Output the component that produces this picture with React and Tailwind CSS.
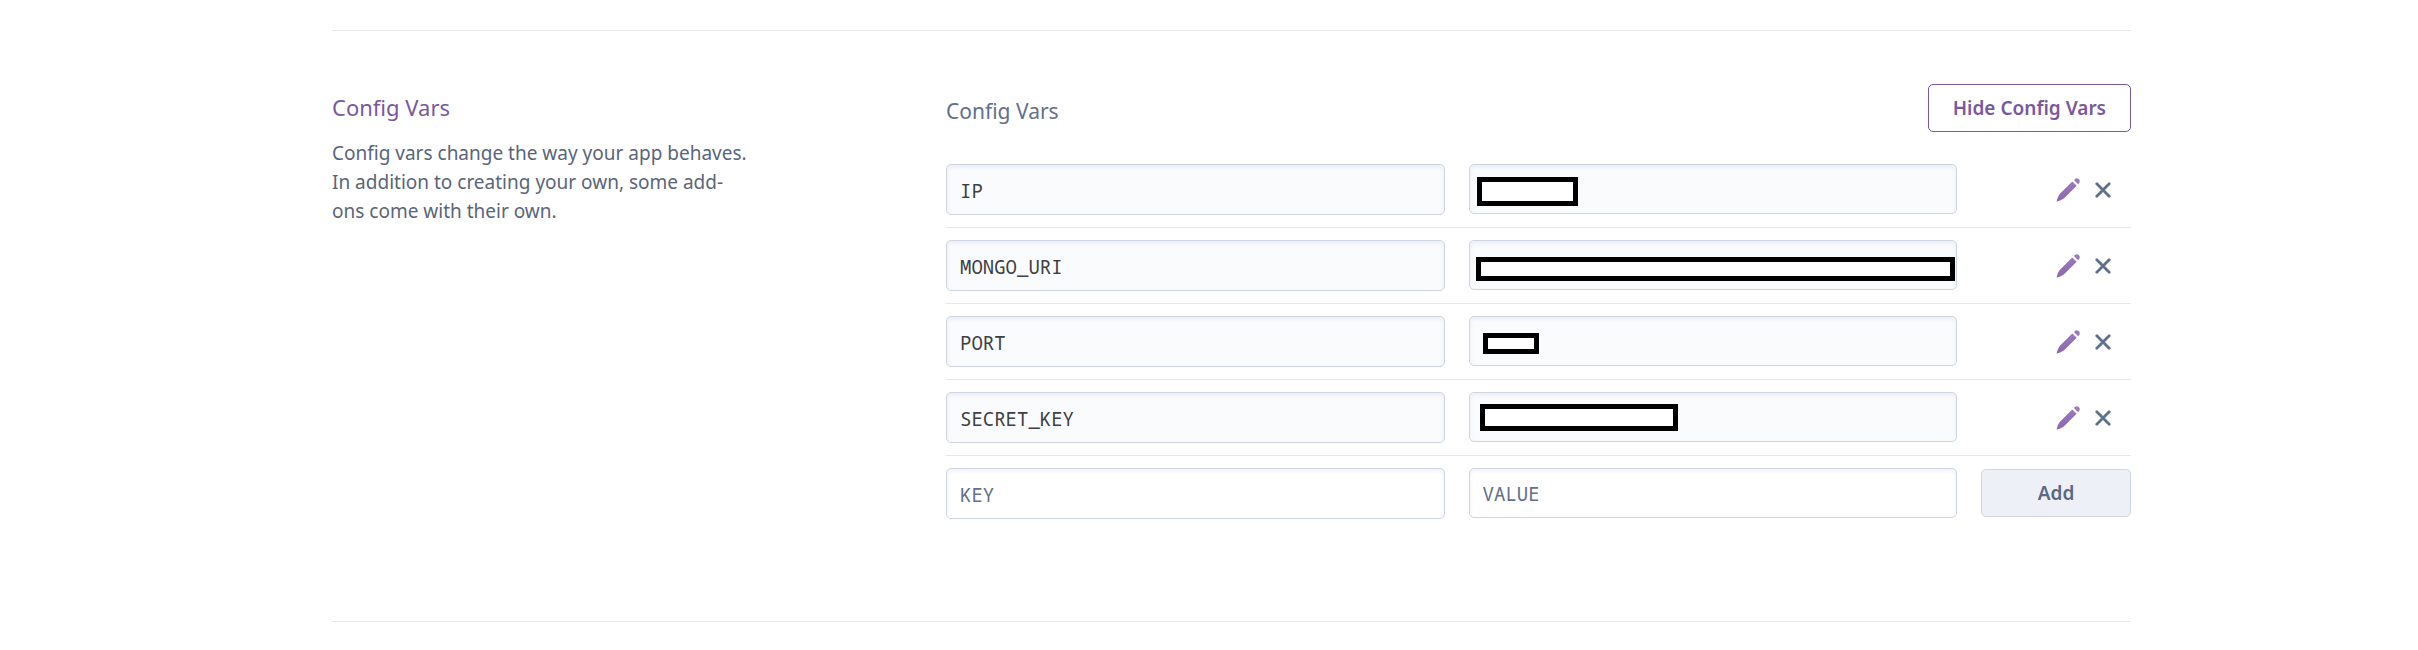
const VARS = [
  { key: "IP", mask: "left-[8px] top-[13px] w-[101px] h-[29px]" },
  { key: "MONGO_URI", mask: "left-[7px] right-[2px] top-[17px] h-[24px]" },
  { key: "PORT", mask: "left-[14px] top-[17px] w-[56px] h-[21px]" },
  { key: "SECRET_KEY", mask: "left-[11px] top-[12px] w-[198px] h-[27px]" },
];

const FIELD =
  "block w-full rounded-[5px] border border-[#cfd5e2] px-[13px] pt-[2px] font-['Noto_Sans_Mono','DejaVu_Sans_Mono',monospace] text-[19px] outline-none shadow-[inset_0_2px_4px_rgba(207,215,230,0.4)] placeholder:text-[#62708a] placeholder:opacity-100";

function PencilIcon() {
  return (
    <svg viewBox="0 0 24 24" className="size-6" aria-hidden="true">
      <defs>
        <linearGradient id="pencil" x1="0" y1="0" x2="0" y2="1">
          <stop offset="0" stopColor="#9e7cc1" />
          <stop offset="1" stopColor="#8a67ae" />
        </linearGradient>
      </defs>
      <path
        fill="url(#pencil)"
        d="M16.3 3.5 20.7 7.8 8 20.2C6 21.8 3.4 22.8 0.6 23.5 1.2 20.8 2.1 18 3.7 15.9ZM17.9 2.1 19 1C20 0 21.6 0 22.8 1.1 24 2.3 24.1 4 23.1 5L22.1 6.2Z"
      />
    </svg>
  );
}

function CloseIcon() {
  return (
    <svg viewBox="0 0 16 16" className="size-4" aria-hidden="true">
      <path d="M1.8 1.8 14.2 14.2M14.2 1.8 1.8 14.2" stroke="#5f718c" strokeWidth="2.8" strokeLinecap="round" fill="none" />
    </svg>
  );
}

function VarRow({ name, mask }) {
  const cell = "border-b border-[#e6e8ec] py-3 align-top";
  return (
    <tr>
      <td className={`${cell} pr-6`}>
        <input readOnly aria-label={`${name} key`} value={name} className={`${FIELD} h-[51px] bg-[#fafbfd] text-[#3f3f44]`} />
      </td>
      <td className={`${cell} pr-6`}>
        <div className="relative">
          <input readOnly aria-label={`${name} value`} value="" className={`${FIELD} h-[50px] bg-[#fafbfd] text-[#3f3f44]`} />
          <span className={`absolute border-[5px] border-black bg-white ${mask}`} />
        </div>
      </td>
      <td className={cell}>
        <div className="flex h-[51px] items-center justify-end gap-[15px] pr-5">
          <button type="button" aria-label={`Edit ${name}`}>
            <PencilIcon />
          </button>
          <button type="button" aria-label={`Delete ${name}`}>
            <CloseIcon />
          </button>
        </div>
      </td>
    </tr>
  );
}

export default function App() {
  return (
    <main className="bg-white pt-[30px] pr-[287px] pb-7 pl-[332px] font-['Noto_Sans',sans-serif]">
      <section className="grid grid-cols-[614fr_1185fr] border-y border-[#e6e8ec] pt-[53px] pb-[90px]">
        <div className="pt-2">
          <h2 className="text-[22px] leading-[30px] text-[#79589f]">Config Vars</h2>
          <p className="mt-[17px] max-w-[418px] text-[19px] leading-[29px] text-[#596579]">
            Config vars change the way your app behaves. In addition to creating your own, some add-<wbr />ons come with their own.
          </p>
        </div>

        <div>
          <div className="mb-5 flex items-center justify-between">
            <h3 className="pt-[6px] text-[21px] leading-7 text-[#62708a]">Config Vars</h3>
            <button
              type="button"
              className="h-12 rounded-[5px] border border-[#79589f] px-6 text-[19px] font-semibold text-[#79589f]"
            >
              Hide Config Vars
            </button>
          </div>

          <table className="w-full table-fixed border-separate border-spacing-0">
            <colgroup>
              <col className="w-[44.1%]" />
              <col />
              <col className="w-[150px]" />
            </colgroup>
            <tbody>
              {VARS.map((v) => (
                <VarRow key={v.key} name={v.key} mask={v.mask} />
              ))}
              <tr>
                <td className="py-3 pr-6 align-top">
                  <input aria-label="New key" placeholder="KEY" className={`${FIELD} h-[51px] bg-white text-[#3f3f44]`} />
                </td>
                <td className="py-3 pr-6 align-top">
                  <input aria-label="New value" placeholder="VALUE" className={`${FIELD} h-[50px] bg-white text-[#3f3f44]`} />
                </td>
                <td className="py-3 align-top">
                  <button
                    type="button"
                    className="mt-px h-12 w-full rounded-[5px] border border-[#cfd5e2] bg-[#edf0f6] text-[19px] font-semibold text-[#596981]"
                  >
                    Add
                  </button>
                </td>
              </tr>
            </tbody>
          </table>
        </div>
      </section>
    </main>
  );
}
